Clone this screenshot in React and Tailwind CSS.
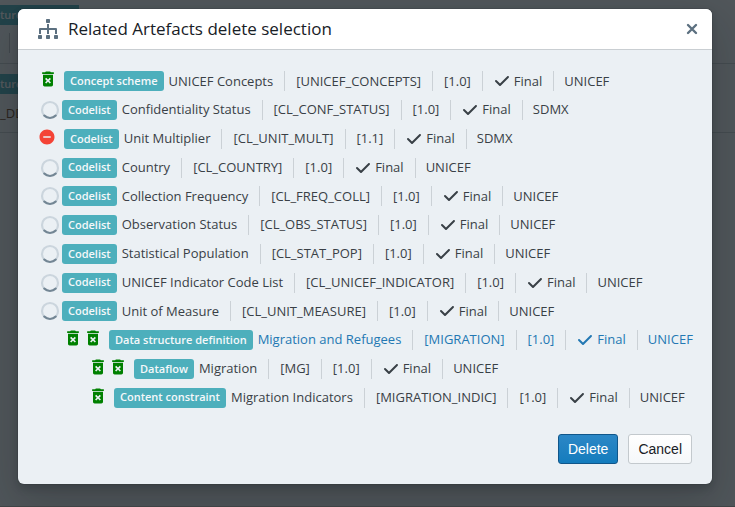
import { Fragment } from "react";
import { MdDeleteForever, MdRemoveCircle } from "react-icons/md";

const ARTEFACTS = [
  { icons: ["trash"], level: 0, type: "Concept scheme", name: "UNICEF Concepts", id: "UNICEF_CONCEPTS", version: "1.0", agency: "UNICEF" },
  { icons: ["spinner"], level: 0, type: "Codelist", name: "Confidentiality Status", id: "CL_CONF_STATUS", version: "1.0", agency: "SDMX" },
  { icons: ["error"], level: 0, type: "Codelist", name: "Unit Multiplier", id: "CL_UNIT_MULT", version: "1.1", agency: "SDMX" },
  { icons: ["spinner"], level: 0, type: "Codelist", name: "Country", id: "CL_COUNTRY", version: "1.0", agency: "UNICEF" },
  { icons: ["spinner"], level: 0, type: "Codelist", name: "Collection Frequency", id: "CL_FREQ_COLL", version: "1.0", agency: "UNICEF" },
  { icons: ["spinner"], level: 0, type: "Codelist", name: "Observation Status", id: "CL_OBS_STATUS", version: "1.0", agency: "UNICEF" },
  { icons: ["spinner"], level: 0, type: "Codelist", name: "Statistical Population", id: "CL_STAT_POP", version: "1.0", agency: "UNICEF" },
  { icons: ["spinner"], level: 0, type: "Codelist", name: "UNICEF Indicator Code List", id: "CL_UNICEF_INDICATOR", version: "1.0", agency: "UNICEF" },
  { icons: ["spinner"], level: 0, type: "Codelist", name: "Unit of Measure", id: "CL_UNIT_MEASURE", version: "1.0", agency: "UNICEF" },
  { icons: ["trash", "trash"], level: 1, type: "Data structure definition", name: "Migration and Refugees", id: "MIGRATION", version: "1.0", agency: "UNICEF", active: true },
  { icons: ["trash", "trash"], level: 2, type: "Dataflow", name: "Migration", id: "MG", version: "1.0", agency: "UNICEF" },
  { icons: ["trash"], level: 2, type: "Content constraint", name: "Migration Indicators", id: "MIGRATION_INDIC", version: "1.0", agency: "UNICEF" },
];

const INDENT = ["pl-5", "pl-[45px]", "pl-[70px]"];

function TreeIcon() {
  return (
    <svg width="20" height="20" viewBox="0 0 20 20" fill="#5c7080" aria-hidden="true">
      <rect x="8" y="0" width="4" height="4" rx="0.8" />
      <rect x="0" y="16" width="4" height="4" rx="0.8" />
      <rect x="8" y="16" width="4" height="4" rx="0.8" />
      <rect x="16" y="16" width="4" height="4" rx="0.8" />
      <path d="M2 15v-5h16v5M10 5v10" fill="none" stroke="#5c7080" strokeWidth="2" strokeLinejoin="round" />
    </svg>
  );
}

function Tick() {
  return (
    <svg width="16" height="16" viewBox="0 0 16 16" fill="currentColor" aria-hidden="true">
      <path d="M14 3c-.28 0-.53.11-.71.29L6 10.59l-3.29-3.3a1.003 1.003 0 00-1.42 1.42l4 4c.18.18.43.29.71.29s.53-.11.71-.29l8-8A1.003 1.003 0 0014 3z" />
    </svg>
  );
}

function StatusIcon({ kind }) {
  if (kind === "trash") {
    return <MdDeleteForever size={20} className="mb-1 shrink-0 text-[#008000]" />;
  }
  if (kind === "error") {
    return <MdRemoveCircle size={18} className="mr-0.5 mb-1 shrink-0 text-[#f44336]" />;
  }
  return (
    <svg width="20" height="20" viewBox="0 0 20 20" fill="none" className="shrink-0" aria-hidden="true">
      <circle cx="10" cy="10" r="8" stroke="#cbd5dd" strokeWidth="2.2" />
      <path d="M4.3 15.6A8 8 0 0 0 15.7 15.6" stroke="#738694" strokeWidth="2.2" strokeLinecap="round" />
    </svg>
  );
}

function Tag({ children }) {
  return (
    <span className="flex h-5 shrink-0 items-center rounded-[3px] bg-[#4dafbc] px-1.5 text-[11px] font-semibold whitespace-nowrap text-[#f5f8fa]">
      {children}
    </span>
  );
}

function Row({ item }) {
  const spinning = item.icons[0] === "spinner";
  return (
    <li className={`flex items-center whitespace-nowrap ${INDENT[item.level]} ${item.active ? "text-[#2378b3]" : "text-[#394046]"}`}>
      <span className={`flex items-center ${spinning ? "px-0.5" : "pr-1.5"}`}>
        {item.icons.map((kind, i) => (
          <StatusIcon key={i} kind={kind} />
        ))}
      </span>
      <Tag>{item.type}</Tag>
      <span className="pr-[11px] pl-[5px]">{item.name}</span>
      {[`[${item.id}]`, `[${item.version}]`].map((text) => (
        <Fragment key={text}>
          <span className="h-5 w-px bg-[#cbd1d6]" />
          <span className="px-[11px]">{text}</span>
        </Fragment>
      ))}
      <span className="h-5 w-px bg-[#cbd1d6]" />
      <span className="flex items-center gap-1 px-[11px]">
        <Tick />
        Final
      </span>
      <span className="h-5 w-px bg-[#cbd1d6]" />
      <span className="pl-2.5">{item.agency}</span>
    </li>
  );
}

function Backdrop() {
  return (
    <div aria-hidden="true" className="text-[13px]">
      <div className="h-16 border-b border-[#c3cbd1] pt-[5px]">
        <div className="flex w-[79px] bg-[#4dafbc]">
          <span className="h-5 text-[11px] leading-5 font-semibold whitespace-nowrap text-[#f5f8fa]">ture definition</span>
        </div>
        <div className="mt-2 ml-[9px] h-5 w-px bg-[#b9c0c5]" />
      </div>
      <div className="h-[69px] border-b border-[#c3cbd1] pt-2.5">
        <div className="flex w-[79px] bg-[#4dafbc]">
          <span className="h-5 text-[11px] leading-5 font-semibold whitespace-nowrap text-[#f5f8fa]">ture definition</span>
        </div>
        <div className="mt-2.5 text-[#6b4a2a]">_DD</div>
      </div>
    </div>
  );
}

export default function App() {
  return (
    <div className="relative min-h-screen overflow-hidden border-b border-[#3f4345] bg-[#ebf0f4] font-['Open_Sans','Noto_Sans',sans-serif]">
      <Backdrop />
      <div className="absolute inset-0 bg-[#10161a]/70 pt-[9px] pr-[23px] pb-[22px] pl-[18px]">
        <div
          role="dialog"
          aria-labelledby="dialog-title"
          className="overflow-hidden rounded-md bg-[#ebf0f4] pb-5 shadow-[0_0_0_1px_rgba(16,22,26,0.1),0_4px_8px_rgba(16,22,26,0.2),0_18px_46px_6px_rgba(16,22,26,0.2)]"
        >
          <header className="flex h-[41px] items-center border-b border-[#c9ced2] bg-white pr-2.5 pl-5">
            <TreeIcon />
            <h4 id="dialog-title" className="flex-1 pl-2.5 text-[17px] text-[#182026]">
              Related Artefacts delete selection
            </h4>
            <button type="button" aria-label="Close" className="flex h-5 w-5 items-center justify-center">
              <svg width="12" height="12" viewBox="0 0 12 12" stroke="#5c7080" strokeWidth="2.4" strokeLinecap="round" aria-hidden="true">
                <path d="M2 2l8 8M10 2l-8 8" />
              </svg>
            </button>
          </header>
          <ul className="mt-[17px] grid h-[345px] auto-rows-fr text-[13px]">
            {ARTEFACTS.map((item) => (
              <Row key={item.id} item={item} />
            ))}
          </ul>
          <footer className="mt-[22px] flex justify-end gap-2.5 pr-5 font-['Liberation_Sans',Arial,sans-serif] text-sm">
            <button type="button" className="h-[30px] rounded-[3px] border border-[#10568a] bg-linear-to-b from-[#2b87c6] to-[#137cbd] px-[9px] text-white">
              Delete
            </button>
            <button type="button" className="h-[30px] rounded-[3px] border border-[#c3c9cd] bg-linear-to-b from-white to-[#f5f8fa] px-[9px] text-[#182026]">
              Cancel
            </button>
          </footer>
        </div>
      </div>
    </div>
  );
}
